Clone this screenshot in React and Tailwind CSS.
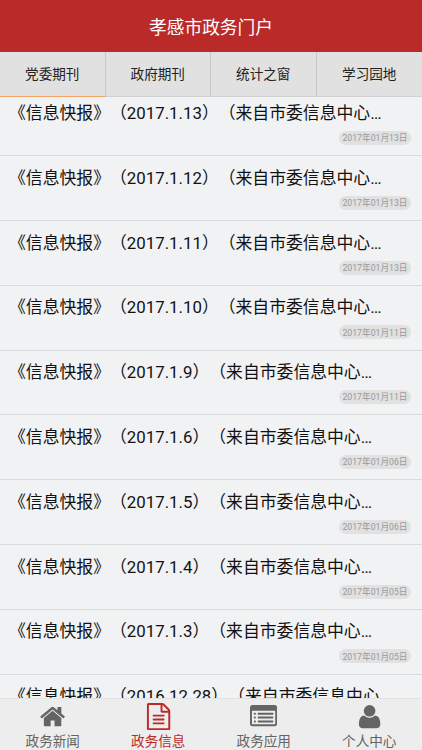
const tabs = ['党委期刊', '政府期刊', '统计之窗', '学习园地'];

const items = [
  ['2017.1.13', '2017年01月13日'],
  ['2017.1.12', '2017年01月13日'],
  ['2017.1.11', '2017年01月13日'],
  ['2017.1.10', '2017年01月11日'],
  ['2017.1.9', '2017年01月11日'],
  ['2017.1.6', '2017年01月06日'],
  ['2017.1.5', '2017年01月06日'],
  ['2017.1.4', '2017年01月05日'],
  ['2017.1.3', '2017年01月05日'],
  ['2016.12.28', null],
];

function HomeIcon() {
  return (
    <path d="M1472 992v480q0 26-19 45t-45 19h-384v-384h-256v384h-384q-26 0-45-19t-19-45v-480q0-1 .5-3t.5-3l575-474 575 474q1 2 1 6zm223-69l-62 74q-8 9-21 11h-3q-13 0-21-7l-692-577-692 577q-12 8-24 7-13-2-21-11l-62-74q-8-10-7-23.5t11-21.5l719-599q32-26 76-26t76 26l244 204v-195q0-14 9-23t23-9h192q14 0 23 9t9 23v408l219 182q10 8 11 21.5t-7 23.5z" />
  );
}

function FileIcon() {
  return (
    <path d="M1596 380q28 28 48 76t20 88v1152q0 40-28 68t-68 28h-1344q-40 0-68-28t-28-68v-1600q0-40 28-68t68-28h896q40 0 88 20t76 48zm-444-244v376h376q-10-29-22-41l-313-313q-12-12-41-22zm384 1528v-1024h-416q-40 0-68-28t-28-68v-416h-768v1536h1280zm-1024-864q0-14 9-23t23-9h704q14 0 23 9t9 23v64q0 14-9 23t-23 9h-704q-14 0-23-9t-9-23v-64zm736 224q14 0 23 9t9 23v64q0 14-9 23t-23 9h-704q-14 0-23-9t-9-23v-64q0-14 9-23t23-9h704zm0 256q14 0 23 9t9 23v64q0 14-9 23t-23 9h-704q-14 0-23-9t-9-23v-64q0-14 9-23t23-9h704z" />
  );
}

function ListIcon() {
  return (
    <>
      <path
        fillRule="evenodd"
        d="M160 128h1472q66 0 113 47t47 113v1088q0 66-47 113t-113 47h-1472q-66 0-113-47t-47-113v-1088q0-66 47-113t113-47zM128 544v832q0 32 32 32h1472q32 0 32-32v-832q0-32-32-32h-1472q-32 0-32 32z"
      />
      <rect x="256" y="640" width="128" height="128" rx="32" />
      <rect x="256" y="896" width="128" height="128" rx="32" />
      <rect x="256" y="1152" width="128" height="128" rx="32" />
      <rect x="512" y="640" width="1024" height="128" rx="32" />
      <rect x="512" y="896" width="1024" height="128" rx="32" />
      <rect x="512" y="1152" width="1024" height="128" rx="32" />
    </>
  );
}

function UserIcon() {
  return (
    <path d="M1600 1405q0 120-73 189.5t-194 69.5h-874q-121 0-194-69.5t-73-189.5q0-53 3.5-103.5t14-109 26.5-108.5 43-97.5 62-81 85.5-53.5 111.5-20q9 0 42 21.5t74.5 48 108 48 133.5 21.5 133.5-21.5 108-48 74.5-48 42-21.5q61 0 111.5 20t85.5 53.5 62 81 43 97.5 26.5 108.5 14 109 3.5 103.5zm-320-893q0 159-112.5 271.5t-271.5 112.5-271.5-112.5-112.5-271.5 112.5-271.5 271.5-112.5 271.5 112.5 112.5 271.5z" />
  );
}

const nav = [
  { label: '政务新闻', Icon: HomeIcon },
  { label: '政务信息', Icon: FileIcon, active: true },
  { label: '政务应用', Icon: ListIcon },
  { label: '个人中心', Icon: UserIcon },
];

export default function App() {
  return (
    <div className="flex h-[750px] w-[422px] flex-col overflow-hidden bg-[#f1f2f4] font-['Roboto','Noto_Sans_CJK_SC',sans-serif] [text-spacing-trim:space-all]">
      <header className="flex h-[52px] shrink-0 items-center justify-center bg-[#b92a29] pt-[4px] text-[17.7px] text-white">
        孝感市政务门户
      </header>

      <div className="grid h-[45px] shrink-0 grid-cols-4 bg-[#e1e1e1] text-[13.6px] text-[#222]">
        {tabs.map((t, i) => (
          <div
            key={t}
            className={`flex items-center justify-center border-b ${
              i === 0 ? 'border-b-[#f0a468]' : 'border-b-[#d2d2d2]'
            } ${i < 3 ? 'border-r border-r-[#c8c8c8]' : ''}`}
          >
            {t}
          </div>
        ))}
      </div>

      <main className="min-h-0 flex-1 overflow-hidden">
        <div className="-mt-[5.6px]">
          {items.map(([no, date]) => (
            <article
              key={no}
              className="flex h-[64.8px] flex-col border-b border-[#d9dadc] pr-[11px] pl-[9px]"
            >
              <h2 className="mt-[9.6px] h-[24px] text-[16.83px] leading-[24px] whitespace-nowrap text-[#111]">
                《信息快报》（{no}）（来自市委信息中心…
              </h2>
              {date && (
                <time className="mt-[6px] flex h-[14px] w-[72px] items-center justify-center self-end rounded-full bg-[#e1e1e1] pt-px text-[8.7px] leading-none whitespace-nowrap text-[#999]">
                  {date}
                </time>
              )}
            </article>
          ))}
        </div>
      </main>

      <nav className="grid h-[52px] shrink-0 grid-cols-4 border-t border-[#e2e2e2] bg-[#ededed]">
        {nav.map(({ label, Icon, active }) => (
          <div
            key={label}
            className={`flex flex-col items-center pt-[4px] ${active ? 'text-[#b92a29]' : 'text-[#646464]'}`}
          >
            <svg viewBox="0 0 1792 1792" className="size-[27.2px] shrink-0 fill-current">
              <Icon />
            </svg>
            <span className="text-[13.6px] leading-[22px]">{label}</span>
          </div>
        ))}
      </nav>
    </div>
  );
}
